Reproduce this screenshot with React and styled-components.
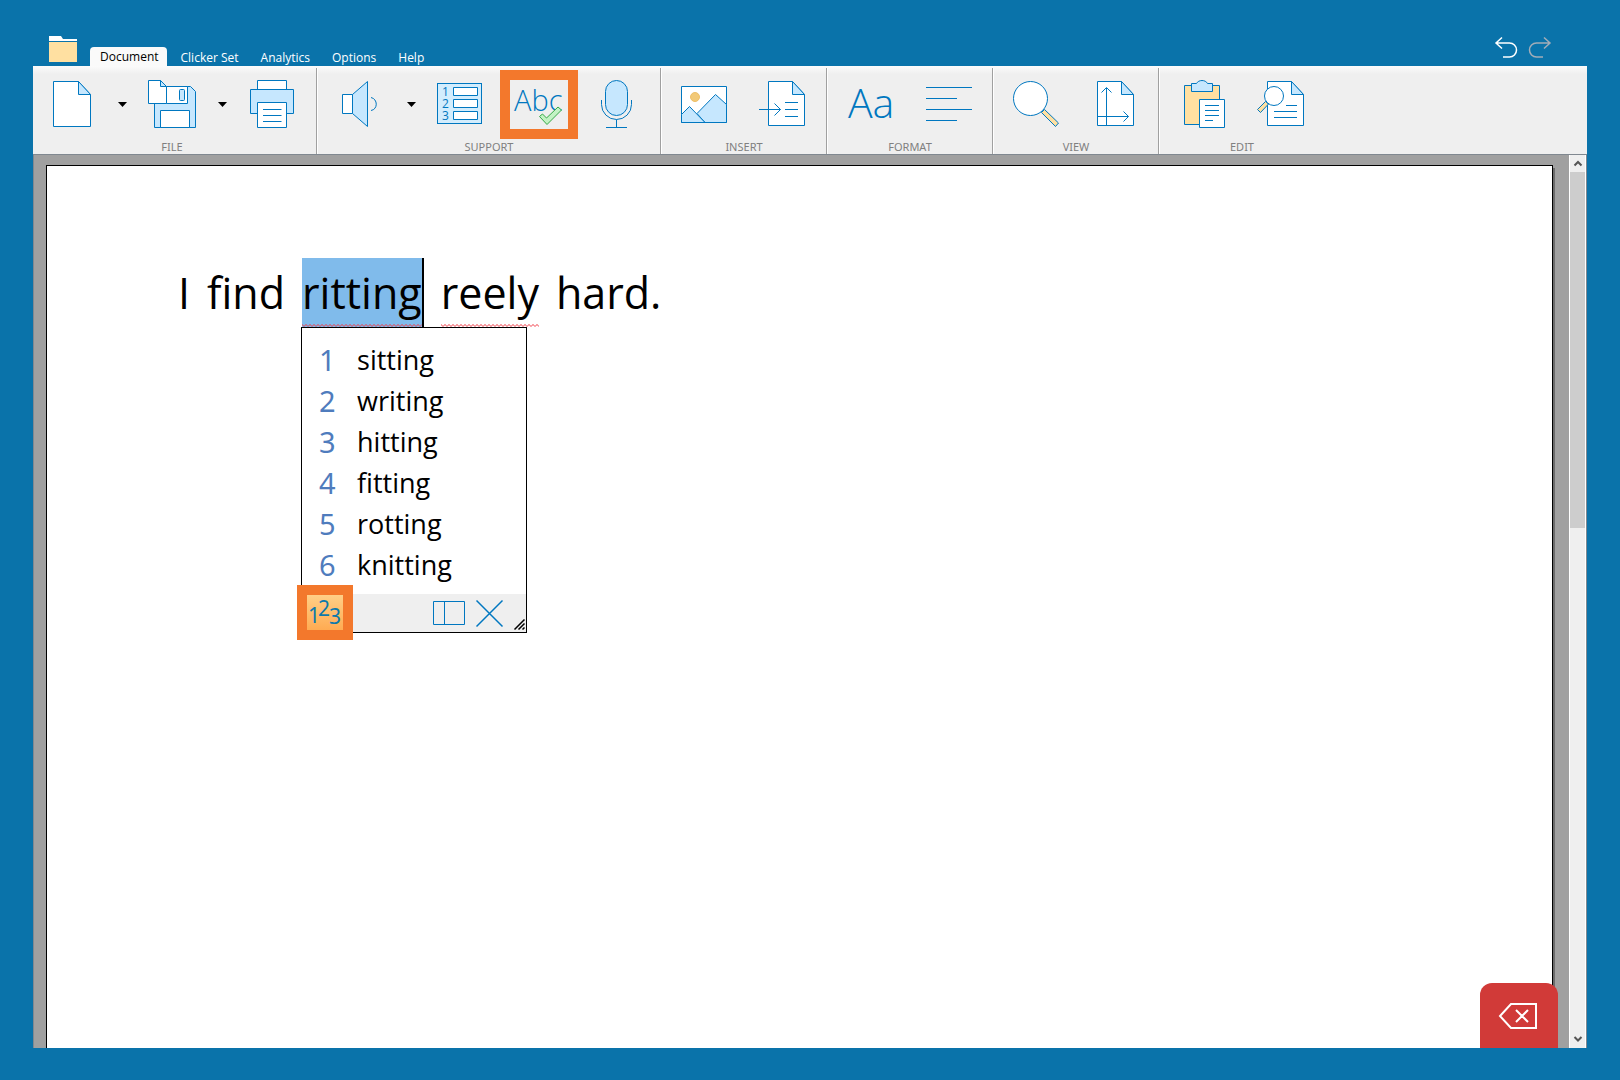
import React, { useState } from "react";
import styled, { createGlobalStyle, css } from "styled-components";

const GlobalStyle = createGlobalStyle`
  * {
    box-sizing: border-box;
  }
  body {
    margin: 0;
    background: #0a73aa;
    font-family: "Open Sans", "Noto Sans", sans-serif;
  }
  button {
    margin: 0;
    padding: 0;
    border: 0;
    background: none;
    font: inherit;
    cursor: pointer;
  }
  svg {
    display: block;
    overflow: visible;
  }
`;

const LINE = "#0077c0";
const SKY = "#c6e7fe";
const SAND = "#ffe0a1";

const Shell = styled.div`
  display: flex;
  flex-direction: column;
  min-height: 100vh;
  padding: 33px 33px 32px;
`;

const TitleBar = styled.header`
  display: flex;
  align-items: flex-end;
  height: 33px;
  padding: 0 36px 0 16px;
`;

const FolderButton = styled.button`
  margin: 0 13px 4px 0;
`;

const Tabs = styled.nav`
  display: flex;
  align-items: flex-end;
  flex: 1;
`;

const Tab = styled.a`
  padding: 0 11px;
  color: #fff;
  font-size: 12px;
  line-height: 16px;
  text-decoration: none;
  white-space: nowrap;
  ${({ $active }) =>
    $active &&
    css`
      margin-right: 3px;
      padding: 2px 8px 1px 10px;
      border-radius: 4px 4px 0 0;
      background: #fafafa;
      color: #000;
    `}
`;

const History = styled.div`
  display: flex;
  gap: 12px;
  padding-bottom: 8px;
`;

const Ribbon = styled.div`
  display: flex;
  height: 89px;
  padding-top: 2px;
  border-bottom: 1px solid #808890;
  background: linear-gradient(#fbfbfb, #efefef 8px);
`;

const Group = styled.section`
  display: flex;
  flex-direction: column;
  padding: 2px 4px 0 5px;
  border-right: 1px solid #a0a0a0;
  box-shadow: 1px 0 #fff;
  &:first-child {
    padding: 2px 5px 0 0;
  }
  &:last-child {
    border-right: 0;
    box-shadow: none;
  }
`;

const Tools = styled.div`
  display: flex;
`;

const Tool = styled.button`
  display: flex;
  justify-content: center;
  width: 78px;
  height: 69px;
  border: 10px solid ${({ $marked }) => ($marked ? "#f3782c" : "transparent")};
`;

const DropButton = styled.button`
  display: flex;
  align-items: center;
  justify-content: center;
  width: 22px;
  height: 69px;
`;

const GroupLabel = styled.h2`
  margin: 0;
  color: #808080;
  font-family: "Noto Sans", sans-serif;
  font-size: 11px;
  font-weight: 400;
  line-height: 15px;
  text-align: center;
`;

const Workspace = styled.main`
  position: relative;
  display: flex;
  flex: 1;
  overflow: hidden;
  border-left: 1px solid #808890;
  border-right: 1px solid #808890;
  background: #a0a0a0;
`;

const Page = styled.article`
  flex: 1;
  margin: 10px 16px 0 12px;
  padding: 92px 131px 0;
  border: 1px solid #000;
  border-bottom: 0;
  background: #fff;
  box-shadow: 2px 3px #6b6b6b;
`;

const Sentence = styled.div`
  display: flex;
  gap: 17px;
  font-family: "Open Sans", sans-serif;
  font-size: 43px;
  line-height: 69px;
  white-space: nowrap;
`;

const Word = styled.span`
  position: relative;
  ${({ $selected }) =>
    $selected &&
    css`
      border-right: 2px solid #000;
      background: #80bbeb;
    `}
`;

const SquiggleLine = styled.svg`
  position: absolute;
  left: 0;
  bottom: 0;
  width: 100%;
  height: 3px;
  overflow: hidden;
`;

const Popup = styled.div`
  position: absolute;
  top: 100%;
  left: -1px;
  z-index: 2;
  width: 226px;
  border: 1px solid #000;
  background: #fff;
`;

const Suggestions = styled.ol`
  margin: 0;
  padding: 11px 0 9px;
  list-style: none;
`;

const Suggestion = styled.button`
  display: flex;
  align-items: center;
  width: 100%;
  height: 41px;
  padding-left: 17px;
  color: #000;
  font-size: 27px;
  line-height: 41px;
  text-align: left;
`;

const Digit = styled.span`
  width: 38px;
  color: #4f7cbd;
  font-family: "Noto Sans", sans-serif;
  font-size: 29px;
`;

const PopupBar = styled.div`
  position: relative;
  display: flex;
  align-items: center;
  justify-content: flex-end;
  gap: 10px;
  height: 38px;
  padding-right: 23px;
  background: #efefef;
`;

const NumbersToggle = styled.button`
  position: absolute;
  top: -9px;
  left: -5px;
  width: 56px;
  height: 55px;
  border: 10px solid #f3782c;
  background: linear-gradient(#ffcf87, #ffab52);
`;

const Grip = styled.svg`
  position: absolute;
  right: 1px;
  bottom: 2px;
`;

const ScrollTrack = styled.div`
  display: flex;
  flex-direction: column;
  width: 17px;
  border: solid #fff;
  border-width: 0 1px;
  background: #efefef;
`;

const ScrollArrow = styled.button`
  display: flex;
  align-items: center;
  justify-content: center;
  height: 17px;
`;

const ScrollThumb = styled.div`
  flex: 356;
  background: #cdcdcd;
`;

const ScrollRest = styled.div`
  flex: 503;
`;

const DeleteButton = styled.button`
  position: absolute;
  right: 28px;
  bottom: 0;
  display: flex;
  justify-content: center;
  width: 78px;
  height: 65px;
  padding: 20px 2px 0 0;
  border-radius: 12px 12px 0 0;
  background: #d13a38;
`;

const Icon = ({ children }) => (
  <svg width="48" height="48" viewBox="0 0 48 48" fill="#fff" stroke={LINE} aria-hidden="true">
    {children}
  </svg>
);

const Caret = () => (
  <svg width="9" height="5" viewBox="0 0 9 5" aria-hidden="true">
    <path d="M0 0h9L4.5 5z" />
  </svg>
);

const NewIcon = () => (
  <Icon>
    <path d="M5.5 1.5h25l12 13v32h-37z" />
    <path d="M30.5 1.5v13h12z" fill={SKY} />
  </Icon>
);

const SaveIcon = () => (
  <Icon>
    <path d="M6.5 6.5h36l5 5v36h-41z" fill={SKY} />
    <path d="M18.5 6.5h21v17h-21z" />
    <rect x="31.5" y="9.5" width="5" height="11" rx="1" fill={SKY} />
    <path d="M12.5 30.5h29v17h-29z" />
    <path d="M.5.5h12l6 6v17H.5z" />
    <path d="M12.5.5v6h6z" fill={SKY} />
  </Icon>
);

const PrintIcon = () => (
  <Icon>
    <path d="M9.5.5h29v12h-29z" />
    <path d="M2.5 9.5h43v24h-43z" fill={SKY} />
    <path d="M9.5 22.5h29v25h-29zM15 29.5h18.5M15 35.5h18.5M15 41.5h18.5" />
  </Icon>
);

const SpeakIcon = () => (
  <Icon>
    <path d="M15.5 14.5l15-13v45l-15-13z" fill={SKY} />
    <path d="M5.5 14.5h10v19h-10z" />
    <path d="M34 17.5c7 1.5 7 12 0 13" fill="none" />
  </Icon>
);

const ListIcon = () => (
  <Icon>
    <rect x=".5" y="3.5" width="44" height="40" fill="#d3edfd" />
    <path d="M16.5 7.5h24v8h-24zM16.5 19.5h24v8h-24zM16.5 31.5h24v8h-24z" />
    <g fill={LINE} stroke="none" fontSize="12" fontFamily="Open Sans, sans-serif">
      <text x="5" y="16">1</text>
      <text x="5" y="28">2</text>
      <text x="5" y="40">3</text>
    </g>
  </Icon>
);

const SpellIcon = () => (
  <Icon>
    <text x="-1" y="31" fill={LINE} stroke="none" fontSize="29" fontWeight="300" fontFamily="Open Sans, sans-serif">
      Abc
    </text>
    <path
      d="M24.5 36.5l3-2.5 4 4L43 27l3.5 3L32 44.5z"
      fill="#c3f2c4"
      stroke="#35a946"
      strokeLinejoin="round"
    />
  </Icon>
);

const MicIcon = () => (
  <Icon>
    <rect x="12.5" y=".5" width="22" height="35" rx="11" fill={SKY} />
    <path d="M8.5 20v4.5a15 15 0 0 0 30 0V20M23.5 39.5v8M13 47.5h21" fill="none" />
  </Icon>
);

const PictureIcon = () => (
  <Icon>
    <path d="M.5 6.5h45v36H.5z" />
    <circle cx="14" cy="17" r="4.5" fill="#f2c977" stroke="#eebf68" />
    <path d="M16 33.5l18.5-19 11 10v18H24z" fill={SKY} />
    <path d="M.5 34.5l8-8 15.5 16H.5z" fill={SKY} />
  </Icon>
);

const InsertIcon = () => (
  <Icon>
    <path d="M9.5 1.5h24l12 13v31h-36z" />
    <path d="M33.5 1.5v13h12z" fill={SKY} />
    <path d="M0 29.5h21.5M15.5 23.5l6 6-6 6M26 22.5h13M26 29.5h13M26 36.5h13" fill="none" />
  </Icon>
);

const FontIcon = () => (
  <Icon>
    <text x="1" y="38" fill={LINE} stroke="none" fontSize="41" fontWeight="300" fontFamily="Open Sans, sans-serif">
      Aa
    </text>
  </Icon>
);

const ParagraphIcon = () => (
  <Icon>
    <path d="M1 7.5h46M1 18.5h31M1 29.5h46M1 40.5h31" />
  </Icon>
);

const ZoomIcon = () => (
  <Icon>
    <path d="M28.5 32.5l3-3 14 13.5-3 3.5z" fill={SAND} />
    <circle cx="17.5" cy="18.5" r="17" />
  </Icon>
);

const PageSizeIcon = () => (
  <Icon>
    <path d="M6.5 1.5h24l12 13v31h-36z" />
    <path d="M30.5 1.5v13h12z" fill={SKY} />
    <path d="M15.5 45.5V8M10.5 12.5l5-5 5 5M6.5 36.5h31M32.5 31.5l5 5-5 5" fill="none" />
  </Icon>
);

const PasteIcon = () => (
  <Icon>
    <path d="M5.5 5.5h35v39h-35z" fill={SAND} />
    <path d="M12.5 3.5h5c2-4 9-4 11 0h5v8h-21z" fill={SKY} />
    <path d="M20.5 19.5h25v28h-25zM26 25.5h14M26 30.5h14M26 35.5h14M26 40.5h8" />
  </Icon>
);

const FindIcon = () => (
  <Icon>
    <path d="M10.5 1.5h24l12 13v31h-36z" />
    <path d="M34.5 1.5v13h12z" fill={SKY} />
    <path d="M8.5 21.5l3 2.5-8 8.5-3-3z" fill={SAND} />
    <circle cx="17" cy="16" r="9.5" />
    <path d="M29 25.5h11M17 31.5h23M17 37.5h23" />
  </Icon>
);

const FolderIcon = () => (
  <svg width="28" height="26" viewBox="0 0 28 26" aria-hidden="true">
    <path d="M0 0h12l2 3h14v2H0z" fill="#fff" />
    <path d="M0 6h28v20H0z" fill={SAND} />
  </svg>
);

const UndoIcon = ({ color, flip }) => (
  <svg width="22" height="21" viewBox="0 0 22 21" fill="none" stroke={color} strokeWidth="1.5" aria-hidden="true">
    <path
      transform={flip ? "matrix(-1 0 0 1 22 0)" : undefined}
      d="M7 .5L1 6l6 5.5M1 6h13.500a7 7 0 0 1 0 14H8"
    />
  </svg>
);

const Chevron = ({ down }) => (
  <svg width="8" height="7" viewBox="0 0 8 7" fill="none" stroke="#555" strokeWidth="2" aria-hidden="true">
    <path d={down ? "M.5 1L4 4.5 7.5 1" : "M.5 5.5L4 2l3.5 3.5"} />
  </svg>
);

const Squiggle = ({ id }) => (
  <SquiggleLine aria-hidden="true">
    <pattern id={id} width="4" height="3" patternUnits="userSpaceOnUse">
      <path d="M-1-.5l3 3 3-3" fill="none" stroke="#f0404a" />
    </pattern>
    <rect width="100%" height="3" fill={`url(#${id})`} />
  </SquiggleLine>
);

const tabs = ["Document", "Clicker Set", "Analytics", "Options", "Help"];

const groups = [
  {
    name: "FILE",
    tools: [
      { label: "New", icon: NewIcon, drop: true },
      { label: "Save", icon: SaveIcon, drop: true },
      { label: "Print", icon: PrintIcon },
    ],
  },
  {
    name: "SUPPORT",
    tools: [
      { label: "Speak", icon: SpeakIcon, drop: true },
      { label: "Predictor", icon: ListIcon },
      { label: "Spell check", icon: SpellIcon, marked: true },
      { label: "Record", icon: MicIcon },
    ],
  },
  {
    name: "INSERT",
    tools: [
      { label: "Picture", icon: PictureIcon },
      { label: "Insert text", icon: InsertIcon },
    ],
  },
  {
    name: "FORMAT",
    tools: [
      { label: "Font", icon: FontIcon },
      { label: "Paragraph", icon: ParagraphIcon },
    ],
  },
  {
    name: "VIEW",
    tools: [
      { label: "Zoom", icon: ZoomIcon },
      { label: "Page size", icon: PageSizeIcon },
    ],
  },
  {
    name: "EDIT",
    tools: [
      { label: "Paste", icon: PasteIcon },
      { label: "Find", icon: FindIcon },
    ],
  },
];

const suggestions = ["sitting", "writing", "hitting", "fitting", "rotting", "knitting"];

const SpellPopup = ({ onPick, onClose }) => {
  const [numbers, setNumbers] = useState(true);
  return (
    <Popup>
      <Suggestions>
        {suggestions.map((word, i) => (
          <li key={word}>
            <Suggestion type="button" onClick={() => onPick(word)}>
              <Digit>{numbers ? i + 1 : ""}</Digit>
              {word}
            </Suggestion>
          </li>
        ))}
      </Suggestions>
      <PopupBar>
        <NumbersToggle
          type="button"
          aria-label="Show numbers"
          aria-pressed={numbers}
          onClick={() => setNumbers(!numbers)}
        >
          <svg width="36" height="35" fill="#0c79ab" fontSize="21" fontFamily="Noto Sans, sans-serif">
            <text x="1" y="28">1</text>
            <text x="11" y="21">2</text>
            <text x="22" y="29">3</text>
          </svg>
        </NumbersToggle>
        <button type="button" aria-label="Dock panel">
          <svg width="33" height="25" fill="none" stroke={LINE}>
            <path d="M.5.5h31v23H.5zM11.5.5v23" />
          </svg>
        </button>
        <button type="button" aria-label="Close" onClick={onClose}>
          <svg width="27" height="27" fill="none" stroke={LINE} strokeWidth="1.5">
            <path d="M.5.5l26 26M26.5.5l-26 26" />
          </svg>
        </button>
        <Grip width="11" height="11" stroke="#000" strokeWidth="1.5" aria-hidden="true">
          <path d="M.5 10.5l10-10M4.5 10.5l6-6M8.5 10.5l2-2" />
        </Grip>
      </PopupBar>
    </Popup>
  );
};

const App = () => {
  const [active, setActive] = useState("Document");
  const [word, setWord] = useState("ritting");
  const [open, setOpen] = useState(true);

  const pick = (value) => {
    setWord(value);
    setOpen(false);
  };

  return (
    <Shell>
      <GlobalStyle />
      <TitleBar>
        <FolderButton type="button" aria-label="Files">
          <FolderIcon />
        </FolderButton>
        <Tabs>
          {tabs.map((tab) => (
            <Tab key={tab} href="#" $active={tab === active} onClick={() => setActive(tab)}>
              {tab}
            </Tab>
          ))}
        </Tabs>
        <History>
          <button type="button" aria-label="Undo">
            <UndoIcon color="#fff" />
          </button>
          <button type="button" aria-label="Redo">
            <UndoIcon color="#a3adb8" flip />
          </button>
        </History>
      </TitleBar>

      <Ribbon>
        {groups.map(({ name, tools }) => (
          <Group key={name}>
            <Tools>
              {tools.map(({ label, icon: ToolIcon, drop, marked }) => (
                <React.Fragment key={label}>
                  <Tool type="button" aria-label={label} $marked={marked}>
                    <ToolIcon />
                  </Tool>
                  {drop && (
                    <DropButton type="button" aria-label={`${label} options`}>
                      <Caret />
                    </DropButton>
                  )}
                </React.Fragment>
              ))}
            </Tools>
            <GroupLabel>{name}</GroupLabel>
          </Group>
        ))}
      </Ribbon>

      <Workspace>
        <Page>
          <Sentence>
            <span>I</span>
            <span>find</span>
            <Word $selected={open}>
              {word}
              {open && <Squiggle id="wave-a" />}
              {open && <SpellPopup onPick={pick} onClose={() => setOpen(false)} />}
            </Word>
            <Word>
              reely
              <Squiggle id="wave-b" />
            </Word>
            <span>hard.</span>
          </Sentence>
        </Page>
        <ScrollTrack>
          <ScrollArrow type="button" aria-label="Scroll up">
            <Chevron />
          </ScrollArrow>
          <ScrollThumb />
          <ScrollRest />
          <ScrollArrow type="button" aria-label="Scroll down">
            <Chevron down />
          </ScrollArrow>
        </ScrollTrack>
        <DeleteButton type="button" aria-label="Delete">
          <svg width="38" height="26" viewBox="0 0 38 26" fill="none" stroke="#fff" strokeWidth="2">
            <path d="M12 1h25v24H12L1 13zM17 7l12 12M29 7L17 19" />
          </svg>
        </DeleteButton>
      </Workspace>
    </Shell>
  );
};

export default App;
